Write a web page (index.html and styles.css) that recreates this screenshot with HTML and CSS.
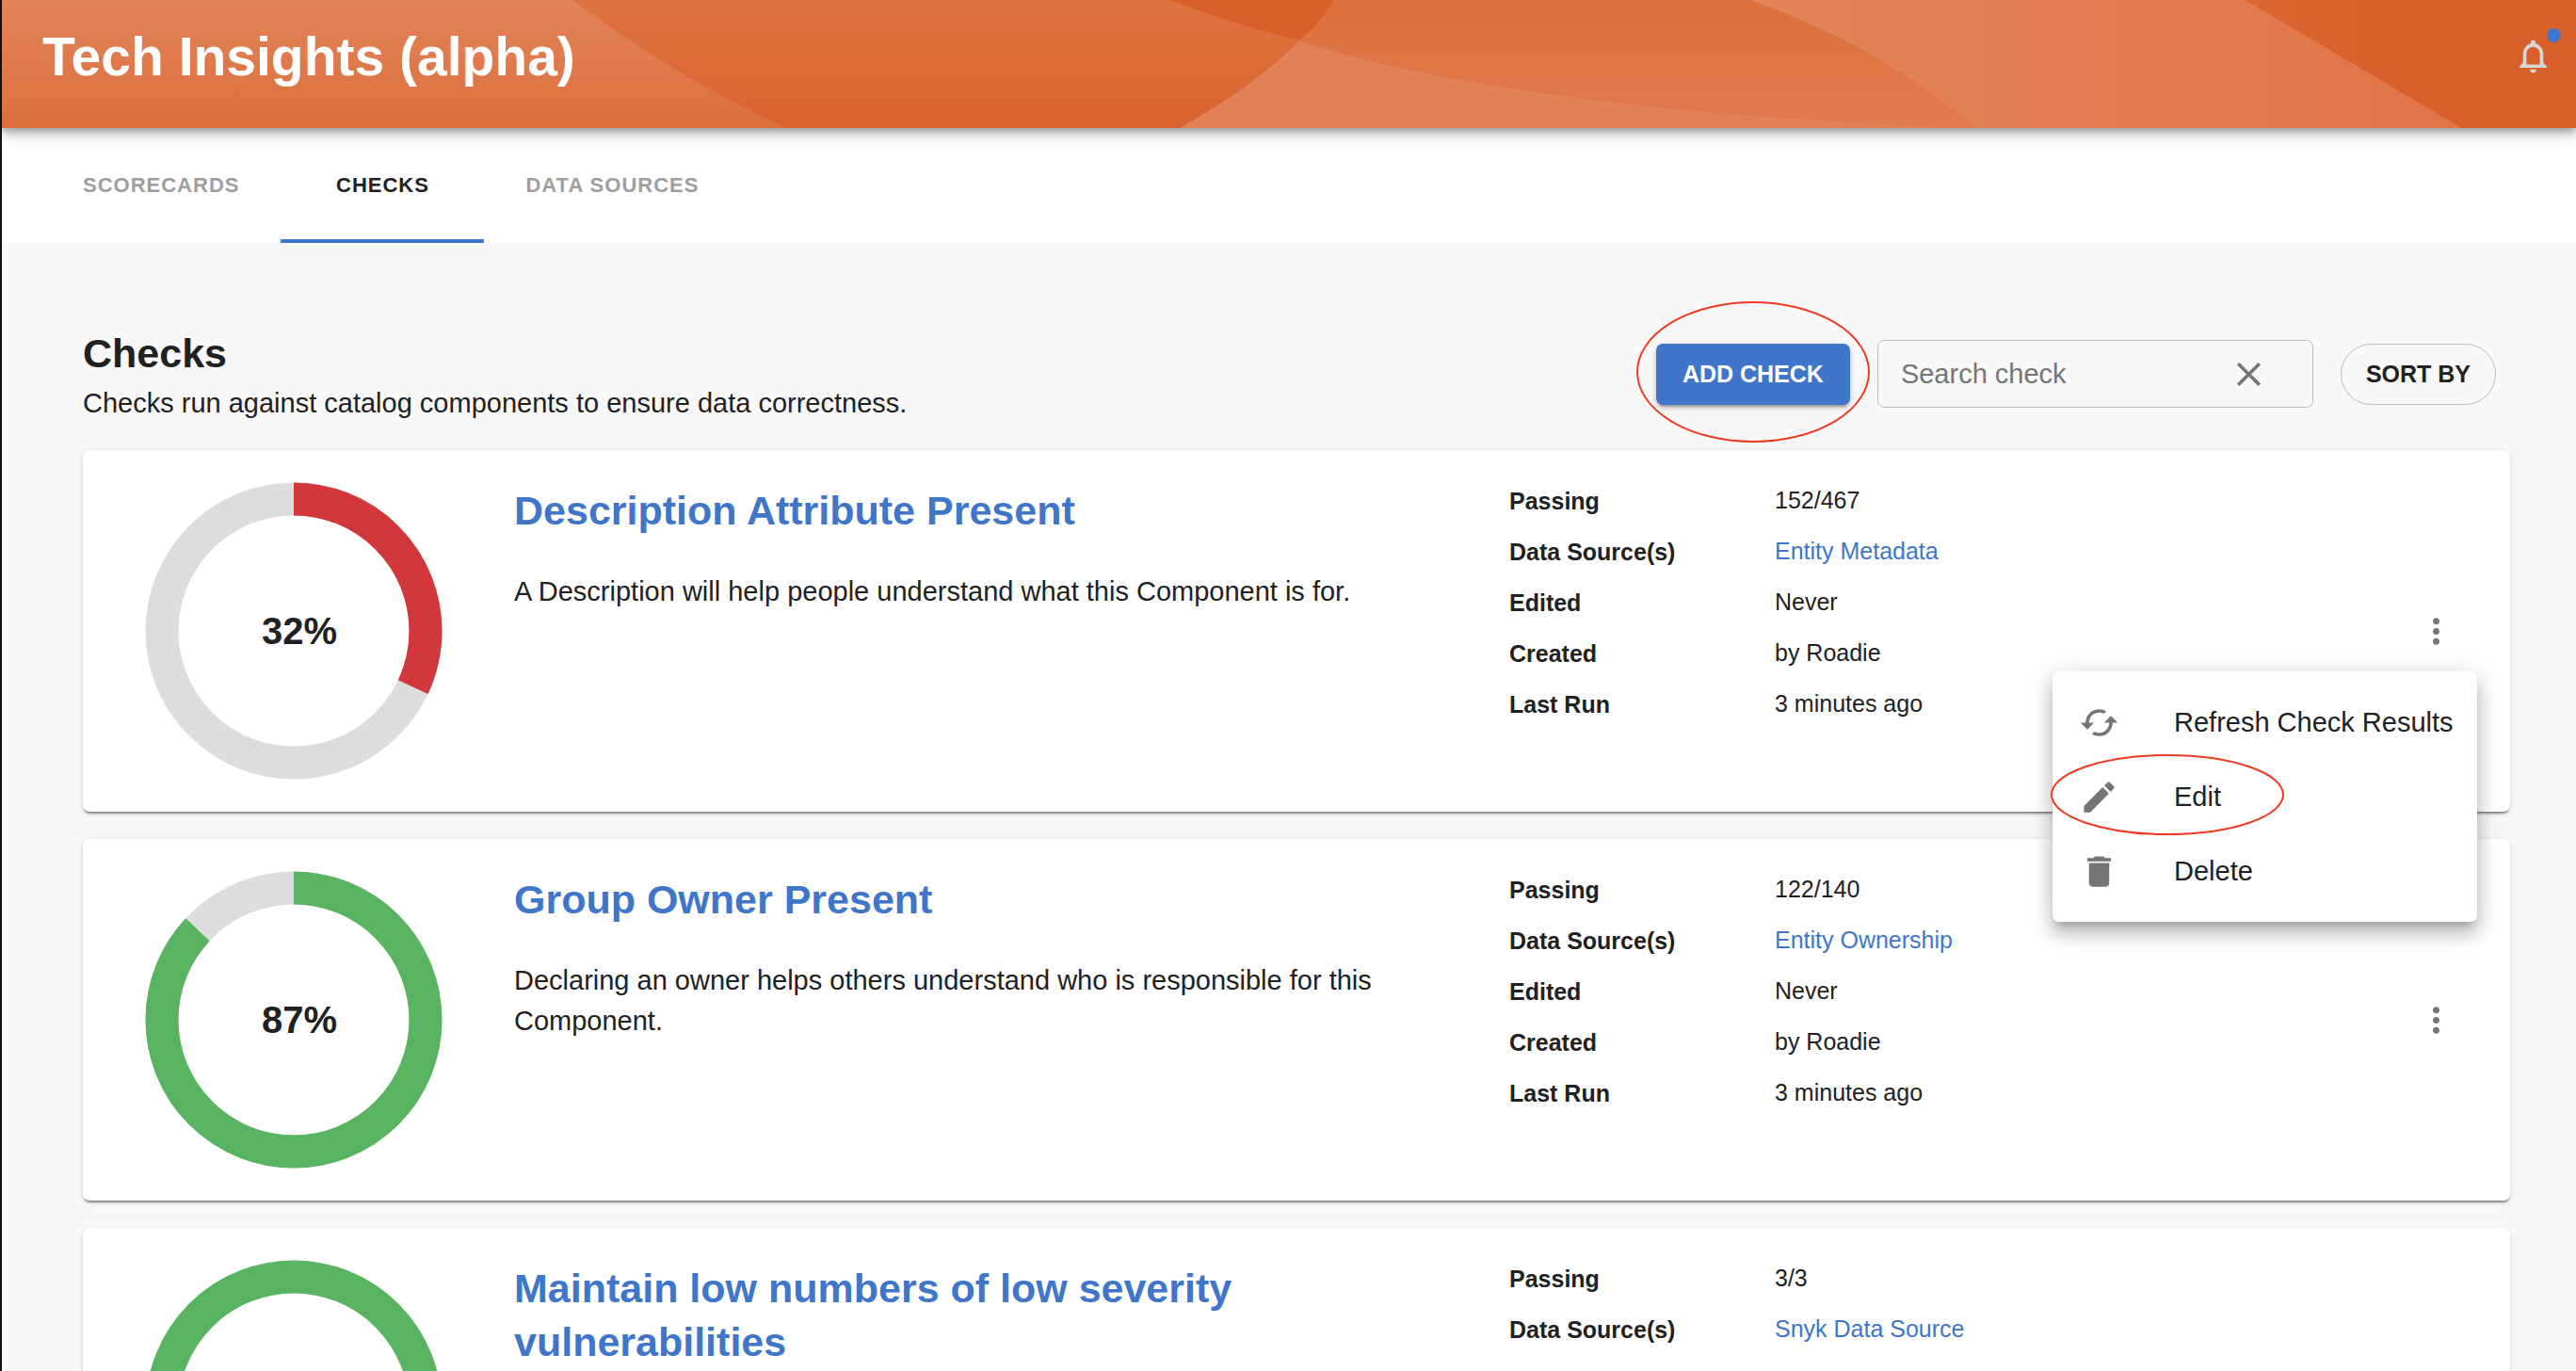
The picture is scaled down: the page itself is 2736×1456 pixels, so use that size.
FILE: index.html
```html
<!DOCTYPE html>
<html lang="en">
<head>
<meta charset="utf-8">
<title>Tech Insights</title>
<link rel="stylesheet" href="styles.css">
</head>
<body>
<svg class="sprite" aria-hidden="true">
  <symbol id="more" viewBox="0 0 24 24"><path d="M12 8c1.100 0 2-.9 2-2s-.9-2-2-2-2 .9-2 2 .9 2 2 2zm0 2c-1.100 0-2 .9-2 2s.9 2 2 2 2-.9 2-2-.9-2-2-2zm0 6c-1.100 0-2 .9-2 2s.9 2 2 2 2-.9 2-2-.9-2-2-2z"/></symbol>
</svg>
<header class="header">
  <svg class="header-art" viewBox="0 0 2734 136" preserveAspectRatio="none" aria-hidden="true">
    <defs>
      <linearGradient id="g1" x1="0" y1="0" x2="0" y2="1"><stop offset="0" stop-color="#e28459"/><stop offset="1" stop-color="#dc6f3d"/></linearGradient>
      <linearGradient id="g2" x1="0" y1="0" x2="0" y2="1"><stop offset="0" stop-color="#de7342"/><stop offset="1" stop-color="#da632f"/></linearGradient>
      <linearGradient id="g3" x1="0" y1="0" x2="0" y2="1"><stop offset="0" stop-color="#dc703d"/><stop offset="1" stop-color="#e07b4e"/></linearGradient>
      <linearGradient id="g4" x1="0" y1="0" x2="1" y2="0"><stop offset="0" stop-color="#e38459"/><stop offset="1" stop-color="#df7546"/></linearGradient>
      <linearGradient id="g5" x1="0" y1="0" x2="1" y2="0"><stop offset="0" stop-color="#db6730"/><stop offset="0.400" stop-color="#d9602a"/></linearGradient>
    </defs>
    <path fill="url(#g2)" d="M600 0H1241Q1304 24 1378 43Q1340 90 1250 136H600z"/>
    <path fill="url(#g1)" d="M0 0H606Q704 74 832 136H0z"/>
    <path fill="#d9602a" d="M1241 0H1415Q1403 22 1378 43Q1304 24 1241 0z"/>
    <path fill="url(#g3)" d="M1415 0H1857Q2010 56 2092 136Q1600 116 1378 43Q1403 22 1415 0z"/>
    <path fill="#e28156" d="M1378 43Q1600 116 2092 136H1250Q1330 92 1378 43z"/>
    <path fill="url(#g4)" d="M1857 0H2383L2613 136H2092Q2010 56 1857 0z"/>
    <path fill="url(#g5)" d="M2383 0H2734V136H2613z"/>
  </svg>
  <h1 class="header-title">Tech Insights (alpha)</h1>
  <button class="bell" type="button" aria-label="Notifications">
    <svg class="icon" viewBox="0 0 24 24"><path d="M12 22c1.100 0 2-.9 2-2h-4c0 1.100.9 2 2 2zm6-6v-5c0-3.070-1.630-5.640-4.500-6.320V4c0-.83-.67-1.500-1.500-1.500s-1.500.67-1.500 1.500v.68C7.640 5.360 6 7.920 6 11v5l-2 2v1h16v-1l-2-2zm-2 1H8v-6c0-2.480 1.510-4.500 4-4.500s4 2.020 4 4.500v6z"/></svg>
    <span class="dot"></span>
  </button>
</header>
<nav class="tabs">
  <a class="tab" href="#scorecards">SCORECARDS</a>
  <a class="tab tab-active" href="#checks" aria-current="page">CHECKS</a>
  <a class="tab" href="#sources">DATA SOURCES</a>
</nav>
<main class="main">
  <div class="toolbar">
    <div class="intro">
      <h2 class="heading">Checks</h2>
      <p class="subtitle">Checks run against catalog components to ensure data correctness.</p>
    </div>
    <div class="actions">
      <div class="add-wrap">
        <button class="btn btn-primary" type="button">ADD CHECK</button>
        <svg class="ring-mark mark-add" viewBox="0 0 248 150" aria-hidden="true"><ellipse cx="124" cy="75" rx="123" ry="74"/></svg>
      </div>
      <div class="search">
        <input class="search-input" type="text" placeholder="Search check" aria-label="Search check">
        <button class="icon-btn" type="button" aria-label="Clear search"><svg class="icon" viewBox="0 0 24 24"><path d="M19 6.410 17.590 5 12 10.590 6.410 5 5 6.410 10.590 12 5 17.590 6.410 19 12 13.410 17.590 19 19 17.590 13.410 12z"/></svg></button>
      </div>
      <button class="btn btn-pill" type="button">SORT BY</button>
    </div>
  </div>

  <section class="cards">
    <article class="card">
      <div class="donut">
        <svg class="donut-svg" viewBox="0 0 316 316" aria-hidden="true"><circle class="track" cx="158" cy="158" r="140"/><circle class="arc arc-bad" cx="158" cy="158" r="140" pathLength="100" stroke-dasharray="32 68"/></svg>
        <span class="percent">32%</span>
      </div>
      <div class="body">
        <h3 class="title"><a href="#description">Description Attribute Present</a></h3>
        <p class="desc">A Description will help people understand what this Component is for.</p>
      </div>
      <dl class="meta">
        <dt>Passing</dt><dd>152/467</dd>
        <dt>Data Source(s)</dt><dd><a href="#metadata">Entity Metadata</a></dd>
        <dt>Edited</dt><dd>Never</dd>
        <dt>Created</dt><dd>by Roadie</dd>
        <dt>Last Run</dt><dd>3 minutes ago</dd>
      </dl>
      <div class="more-wrap">
        <button class="icon-btn" type="button" aria-label="More actions" aria-expanded="true"><svg class="icon"><use href="#more"/></svg></button>
        <div class="menu" role="menu">
          <button class="menu-item" type="button" role="menuitem"><svg class="icon" viewBox="0 0 24 24"><path d="M19 8l-4 4h3c0 3.310-2.690 6-6 6-1.010 0-1.970-.25-2.800-.7l-1.460 1.460C8.970 19.540 10.430 20 12 20c4.420 0 8-3.580 8-8h3l-4-4zM6 12c0-3.310 2.690-6 6-6 1.010 0 1.970.25 2.800.7l1.460-1.460C15.030 4.460 13.570 4 12 4c-4.420 0-8 3.580-8 8H1l4 4 4-4H6z"/></svg>Refresh Check Results</button>
          <button class="menu-item" type="button" role="menuitem"><svg class="icon" viewBox="0 0 24 24"><path d="M3 17.250V21h3.750L17.810 9.940l-3.750-3.750L3 17.250zM20.710 7.040c.39-.39.39-1.020 0-1.410l-2.340-2.340c-.39-.39-1.020-.39-1.410 0l-1.830 1.830 3.750 3.750 1.830-1.830z"/></svg>Edit</button>
          <button class="menu-item" type="button" role="menuitem"><svg class="icon" viewBox="0 0 24 24"><path d="M6 19c0 1.100.9 2 2 2h8c1.100 0 2-.9 2-2V7H6v12zM19 4h-3.500l-1-1h-5l-1 1H5v2h14V4z"/></svg>Delete</button>
          <svg class="ring-mark mark-edit" viewBox="0 0 248 86" aria-hidden="true"><ellipse cx="124" cy="43" rx="123" ry="42"/></svg>
        </div>
      </div>
    </article>

    <article class="card">
      <div class="donut">
        <svg class="donut-svg" viewBox="0 0 316 316" aria-hidden="true"><circle class="track" cx="158" cy="158" r="140"/><circle class="arc" cx="158" cy="158" r="140" pathLength="100" stroke-dasharray="87 13"/></svg>
        <span class="percent">87%</span>
      </div>
      <div class="body">
        <h3 class="title"><a href="#owner">Group Owner Present</a></h3>
        <p class="desc">Declaring an owner helps others understand who is responsible for this Component.</p>
      </div>
      <dl class="meta">
        <dt>Passing</dt><dd>122/140</dd>
        <dt>Data Source(s)</dt><dd><a href="#ownership">Entity Ownership</a></dd>
        <dt>Edited</dt><dd>Never</dd>
        <dt>Created</dt><dd>by Roadie</dd>
        <dt>Last Run</dt><dd>3 minutes ago</dd>
      </dl>
      <div class="more-wrap">
        <button class="icon-btn" type="button" aria-label="More actions"><svg class="icon"><use href="#more"/></svg></button>
      </div>
    </article>

    <article class="card">
      <div class="donut">
        <svg class="donut-svg" viewBox="0 0 316 316" aria-hidden="true"><circle class="arc" cx="158" cy="158" r="140"/></svg>
      </div>
      <div class="body">
        <h3 class="title"><a href="#severity">Maintain low numbers of low severity vulnerabilities</a></h3>
      </div>
      <dl class="meta">
        <dt>Passing</dt><dd>3/3</dd>
        <dt>Data Source(s)</dt><dd><a href="#snyk">Snyk Data Source</a></dd>
      </dl>
    </article>
  </section>
</main>
</body>
</html>
```
FILE: styles.css
```css
* { box-sizing: border-box; }
html { height: 100%; }
body {
  margin: 0;
  height: 100vh;
  overflow: hidden;
  display: flex;
  flex-direction: column;
  border-left: 2px solid #111;
  background: #f8f8f8;
  color: #212121;
  font-family: "Liberation Sans", Arial, sans-serif;
  font-size: 29px;
}
h1, h2, h3, p, dl, dd { margin: 0; }
a { color: #3f76c9; text-decoration: none; }
button { border: 0; background: none; padding: 0; font: inherit; color: inherit; }
.sprite { display: none; }
.icon { display: block; flex: none; width: 43px; height: 43px; fill: #757575; }
.icon-btn { display: block; border-radius: 50%; }

.header {
  position: relative;
  z-index: 1;
  flex: none;
  display: flex;
  align-items: center;
  justify-content: space-between;
  height: 136px;
  padding: 0 24px 18px 43px;
  background: #d9602a;
  box-shadow: 0 4px 8px rgba(0,0,0,.3), 0 8px 16px rgba(0,0,0,.14);
}
.header-art { position: absolute; inset: 0; width: 100%; height: 100%; }
.header-title { position: relative; padding-top: 2px; font-size: 57px; line-height: 64px; color: #fff; }
.bell { position: relative; }
.bell .icon { fill: #d8d8d8; }
.dot { position: absolute; top: -8px; right: -8px; width: 15px; height: 15px; border-radius: 50%; background: #3f76c9; }

.tabs { flex: none; display: flex; height: 122px; padding-left: 42px; background: #fff; }
.tab {
  display: flex;
  align-items: center;
  justify-content: center;
  padding: 4px 44px 0;
  border-bottom: 4px solid transparent;
  color: #9e9e9e;
  font-size: 22px;
  font-weight: 700;
  letter-spacing: 1px;
}
.tab-active { min-width: 216px; color: #212121; border-color: #3f76c9; }

.main { padding: 93px 70px 0 86px; }
.toolbar { display: flex; justify-content: space-between; padding-right: 15px; }
.heading { font-size: 43px; line-height: 48px; }
.subtitle { padding-top: 7px; line-height: 44px; }
.actions { display: flex; align-items: center; gap: 29px; height: 92px; }
.add-wrap { position: relative; }
.btn { display: block; height: 65px; font-size: 25px; font-weight: 700; }
.btn-primary {
  padding: 0 28px;
  border-radius: 7px;
  background: #3f76c9;
  color: #fff;
  box-shadow: 0 5px 2px -3px rgba(0,0,0,.2), 0 3px 4px rgba(0,0,0,.14), 0 2px 9px rgba(0,0,0,.12);
}
.btn-pill { padding: 0 26px; border: 1px solid #bdbdbd; border-radius: 33px; }
.search {
  display: flex;
  align-items: center;
  width: 463px;
  height: 72px;
  padding: 0 46px 0 24px;
  border: 1px solid #bdbdbd;
  border-radius: 7px;
}
.search-input { flex: 1; min-width: 0; padding: 0; border: 0; outline: 0; background: none; font: inherit; color: #212121; }
.search-input::placeholder { color: #757575; opacity: 1; }
.ring-mark { position: absolute; z-index: 3; overflow: visible; fill: none; stroke: #ee3a22; stroke-width: 2; pointer-events: none; }
.mark-add { width: 248px; height: 150px; left: -21px; top: -45px; }
.mark-edit { width: 248px; height: 86px; left: -2px; top: 88px; }

.cards { display: flex; flex-direction: column; gap: 29px; padding-top: 28px; }
.card {
  display: grid;
  grid-template-columns: 316px minmax(0, 981px) minmax(0, 1fr) 43px;
  align-items: start;
  column-gap: 76px;
  min-height: 384px;
  padding: 34px 57px 34px 66px;
  border-radius: 7px;
  background: #fff;
  box-shadow: 0 4px 2px -2px rgba(0,0,0,.3), 0 2px 2px rgba(0,0,0,.14), 0 2px 6px rgba(0,0,0,.12);
}
.donut { position: relative; }
.donut-svg { display: block; width: 316px; height: 316px; transform: rotate(-90deg); }
.track, .arc { fill: none; stroke-width: 35; stroke: #ddd; }
.arc { stroke: #58b460; }
.arc-bad { stroke: #d1373b; }
.percent { position: absolute; inset: 0; display: flex; align-items: center; justify-content: center; padding-left: 12px; font-size: 40px; font-weight: 700; }
.body { padding-right: 60px; }
.title { padding-top: 2px; font-size: 43px; line-height: 57px; }
.desc { padding-top: 36px; line-height: 43px; }
.meta { display: grid; grid-template-columns: 282px 1fr; row-gap: 14px; font-size: 25px; }
.meta dt { line-height: 40px; font-weight: 700; }
.meta dd { line-height: 38px; }
.more-wrap { position: relative; align-self: center; }
.menu {
  position: absolute;
  z-index: 2;
  top: 64px;
  right: -22px;
  width: 451px;
  padding: 15px 0 14px;
  border-radius: 7px;
  background: #fff;
  box-shadow: 0 9px 9px -5px rgba(0,0,0,.2), 0 14px 18px 2px rgba(0,0,0,.14), 0 5px 25px 4px rgba(0,0,0,.12);
}
.menu-item { display: flex; align-items: center; gap: 58px; width: 100%; height: 79px; padding-left: 28px; white-space: nowrap; }
```
